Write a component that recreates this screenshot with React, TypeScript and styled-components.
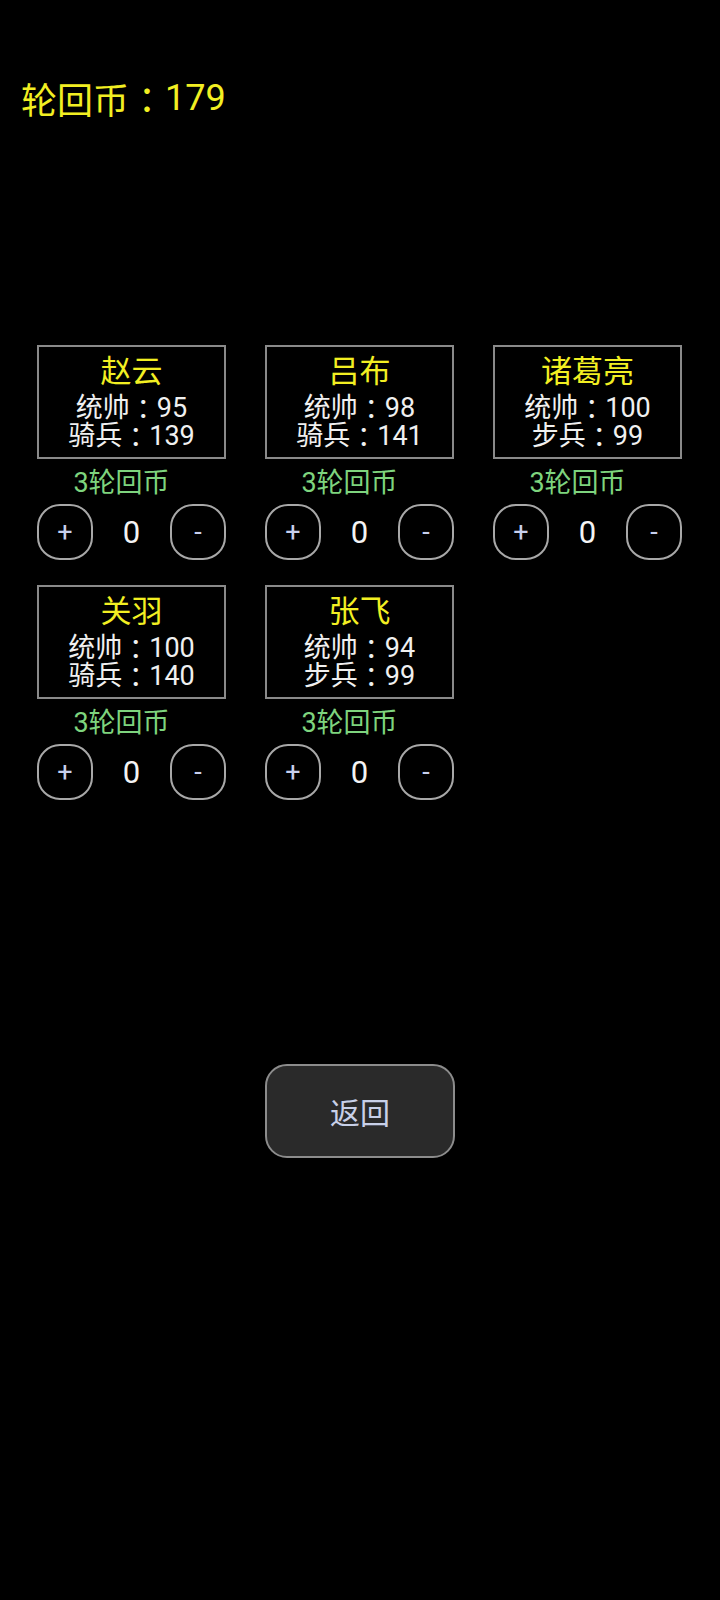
import styled, { createGlobalStyle } from "styled-components";

interface General {
  id: number;
  name: string;
  command: number;
  troopLabel: string;
  troop: number;
}

const generals: General[] = [
  { id: 1, name: "赵云", command: 95, troopLabel: "骑兵", troop: 139 },
  { id: 2, name: "吕布", command: 98, troopLabel: "骑兵", troop: 141 },
  { id: 3, name: "诸葛亮", command: 100, troopLabel: "步兵", troop: 99 },
  { id: 4, name: "关羽", command: 100, troopLabel: "骑兵", troop: 140 },
  { id: 5, name: "张飞", command: 94, troopLabel: "步兵", troop: 99 },
];

const FONT = `Roboto, "Noto Sans CJK SC", "Noto Sans", sans-serif`;

const GlobalStyle = createGlobalStyle`
  html, body {
    margin: 0;
    padding: 0;
    background: #000;
  }
  body {
    font-family: ${FONT};
    color: #eee;
  }
`;

const Page = styled.div`
  min-height: 1600px;
  background: #000;
  padding-top: 75px;
  box-sizing: border-box;
`;

const CoinTitle = styled.div`
  margin-left: 21px;
  height: 46px;
  display: flex;
  align-items: center;
  font-size: 36px;
  color: #f2ef22;
`;

// full-width colon, centred in its em box like the Android rendering
const Colon = styled.span`
  font-family: "Noto Sans CJK TC", "Noto Sans CJK SC", sans-serif;
`;

const Grid = styled.div`
  margin-top: 224px;
  padding-left: 37px;
  display: grid;
  grid-template-columns: repeat(3, 189px);
  column-gap: 39px;
  row-gap: 25px;
`;

const Column = styled.div`
  display: flex;
  flex-direction: column;
`;

const Card = styled.div`
  height: 114px;
  box-sizing: border-box;
  border: 2px solid #8a8a8a;
  padding-top: 8px;
  display: flex;
  flex-direction: column;
  align-items: center;
`;

const Name = styled.div`
  height: 33px;
  line-height: 33px;
  margin-bottom: 6px;
  display: flex;
  align-items: center;
  font-size: 31px;
  color: #f2ef22;
`;

const Stat = styled.div`
  height: 28px;
  line-height: 28px;
  display: flex;
  align-items: center;
  font-size: 27px;
  color: #f0f0f0;
  white-space: nowrap;
`;

const Price = styled.div`
  height: 45px;
  box-sizing: border-box;
  padding: 3px 20px 0 0;
  line-height: 42px;
  text-align: center;
  font-size: 27px;
  color: #7ed47e;
`;

const Stepper = styled.div`
  display: flex;
  justify-content: space-between;
  align-items: center;
  height: 56px;
`;

const RoundButton = styled.button`
  width: 56px;
  height: 56px;
  box-sizing: border-box;
  border: 2px solid #a8a8a8;
  border-radius: 23px;
  background: #000;
  color: #c8d0ee;
  font-family: ${FONT};
  font-size: 27px;
  padding: 0;
  display: flex;
  align-items: center;
  justify-content: center;
`;

const Count = styled.div`
  font-size: 31px;
  color: #f4f4f4;
`;

const Footer = styled.div`
  display: flex;
  justify-content: center;
  margin-top: 264px;
`;

const BackButton = styled.button`
  width: 190px;
  height: 94px;
  box-sizing: border-box;
  border: 2px solid #8c8c8c;
  border-radius: 22px;
  background: #2a2a2a;
  color: #c8d0e8;
  font-family: ${FONT};
  font-size: 30px;
  padding: 0;
`;

const GeneralCard: React.FC<{ general: General }> = ({ general }) => (
  <Column>
    <Card>
      <Name>{general.name}</Name>
      <Stat>
        统帅<Colon>：</Colon>
        {general.command}
      </Stat>
      <Stat>
        {general.troopLabel}
        <Colon>：</Colon>
        {general.troop}
      </Stat>
    </Card>
    <Price>3轮回币</Price>
    <Stepper>
      <RoundButton>+</RoundButton>
      <Count>0</Count>
      <RoundButton>-</RoundButton>
    </Stepper>
  </Column>
);

export default function App() {
  return (
    <>
      <GlobalStyle />
      <Page>
        <CoinTitle>
          轮回币<Colon>：</Colon>179
        </CoinTitle>
        <Grid>
          {generals.map((g) => (
            <GeneralCard key={g.id} general={g} />
          ))}
        </Grid>
        <Footer>
          <BackButton>返回</BackButton>
        </Footer>
      </Page>
    </>
  );
}
